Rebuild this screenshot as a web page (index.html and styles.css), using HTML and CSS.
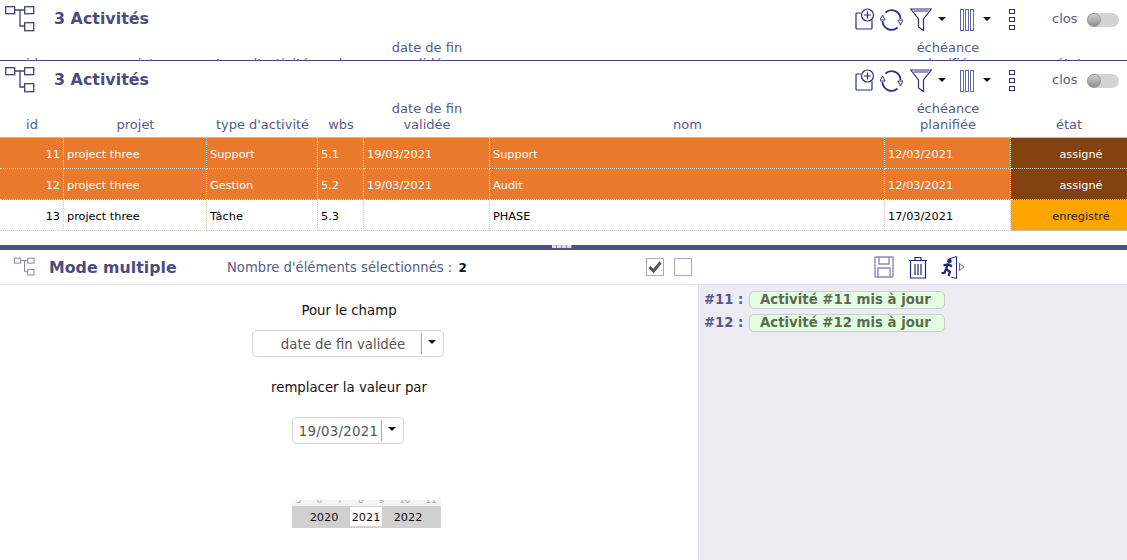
FILE: index.html
```html
<!DOCTYPE html>
<html lang="fr">
<head>
    <meta charset="UTF-8">
    <title>Activités</title>
    <link rel="stylesheet" href="styles.css">
</head>
<body>
    <svg class="defs" width="0" height="0">
        <symbol id="i-tree" viewBox="0 0 30 30">
            <g fill="none" stroke="currentColor" stroke-width="1.300">
                <rect x="0.700" y="1.700" width="9" height="7"/>
                <rect x="19.700" y="1.700" width="9" height="7"/>
                <rect x="19.700" y="17.700" width="9" height="8"/>
                <path d="M10 5H20M15 5V21H20"/>
            </g>
        </symbol>
        <symbol id="i-add" viewBox="0 0 20 22">
            <g fill="none" stroke="currentColor" stroke-width="1.200">
                <path d="M6 5H2Q1 5 1 6V20Q1 21 2 21H16Q17 21 17 20V12"/>
                <circle cx="12.500" cy="7" r="6" fill="#fff"/>
                <path d="M12.500 3.500V10.500M9 7H16"/>
            </g>
        </symbol>
        <symbol id="i-refresh" viewBox="0 0 23 22">
            <g fill="none" stroke="currentColor" stroke-width="1.800">
                <path d="M5.500 3.500A9 9 0 0 1 20.500 10"/>
                <path d="M17.500 18.500A9 9 0 0 1 2.500 12"/>
                <path d="M18 11H23L20.500 16ZM0 11H5L2.500 6Z" stroke-width="1"/>
            </g>
        </symbol>
        <symbol id="i-filter" viewBox="0 0 22 23">
            <path d="M0.700 1H21.300L13.500 11V22.500L8.500 19V11Z" fill="none" stroke="currentColor" stroke-width="1.200"/>
            <path d="M3.500 3H18.500" stroke="currentColor" stroke-width="1"/>
        </symbol>
        <symbol id="i-columns" viewBox="0 0 14 22">
            <g fill="none" stroke="#6466a6" stroke-width="1">
                <rect x="0.500" y="0.500" width="3" height="21"/>
                <rect x="5.500" y="0.500" width="3" height="21"/>
                <rect x="10.500" y="0.500" width="3" height="21"/>
            </g>
        </symbol>
        <symbol id="i-more" viewBox="0 0 6 21">
            <g fill="none" stroke="currentColor" stroke-width="1">
                <rect x="0.500" y="0.500" width="5" height="4"/>
                <rect x="0.500" y="8.500" width="5" height="4"/>
                <rect x="0.500" y="16.500" width="5" height="4"/>
            </g>
        </symbol>
    </svg>

    <section class="pane pane-clipped">
        <div class="list-head">
            <svg class="ico-tree"><use href="#i-tree"/></svg>
            <h1 class="list-title">3 Activités</h1>
            <div class="tools">
                <svg class="ico ico-add"><use href="#i-add"/></svg>
                <svg class="ico ico-refresh"><use href="#i-refresh"/></svg>
                <svg class="ico ico-filter"><use href="#i-filter"/></svg>
                <span class="caret caret-filter"></span>
                <svg class="ico ico-columns"><use href="#i-columns"/></svg>
                <span class="caret caret-columns"></span>
                <svg class="ico ico-more"><use href="#i-more"/></svg>
                <span class="closed-label">clos</span>
                <span class="switch"><span class="knob"></span></span>
            </div>
        </div>
        <table class="grid">
            <colgroup>
                <col class="c-id"><col class="c-project"><col class="c-type"><col class="c-wbs"><col class="c-date"><col class="c-name"><col class="c-due"><col class="c-state">
            </colgroup>
            <thead>
                <tr>
                    <th>id</th><th>projet</th><th>type d'activité</th><th>wbs</th><th>date de fin<br>validée</th><th>nom</th><th>échéance<br>planifiée</th><th>état</th>
                </tr>
            </thead>
        </table>
    </section>

    <section class="pane pane-list">
        <div class="list-head">
            <svg class="ico-tree"><use href="#i-tree"/></svg>
            <h1 class="list-title">3 Activités</h1>
            <div class="tools">
                <svg class="ico ico-add"><use href="#i-add"/></svg>
                <svg class="ico ico-refresh"><use href="#i-refresh"/></svg>
                <svg class="ico ico-filter"><use href="#i-filter"/></svg>
                <span class="caret caret-filter"></span>
                <svg class="ico ico-columns"><use href="#i-columns"/></svg>
                <span class="caret caret-columns"></span>
                <svg class="ico ico-more"><use href="#i-more"/></svg>
                <span class="closed-label">clos</span>
                <span class="switch"><span class="knob"></span></span>
            </div>
        </div>
        <table class="grid">
            <colgroup>
                <col class="c-id"><col class="c-project"><col class="c-type"><col class="c-wbs"><col class="c-date"><col class="c-name"><col class="c-due"><col class="c-state">
            </colgroup>
            <thead>
                <tr>
                    <th>id</th><th>projet</th><th>type d'activité</th><th>wbs</th><th>date de fin<br>validée</th><th>nom</th><th>échéance<br>planifiée</th><th>état</th>
                </tr>
            </thead>
            <tbody>
                <tr class="selected">
                    <td class="num">11</td><td>project three</td><td>Support</td><td>5.1</td><td>19/03/2021</td><td>Support</td><td>12/03/2021</td><td class="state state-assigned">assigné</td>
                </tr>
                <tr class="selected">
                    <td class="num">12</td><td>project three</td><td>Gestion</td><td>5.2</td><td>19/03/2021</td><td>Audit</td><td>12/03/2021</td><td class="state state-assigned">assigné</td>
                </tr>
                <tr>
                    <td class="num">13</td><td>project three</td><td>Tâche</td><td>5.3</td><td></td><td>PHASE</td><td>17/03/2021</td><td class="state state-recorded">enregistré</td>
                </tr>
            </tbody>
        </table>
    </section>

    <div class="splitter"><span class="grip"></span></div>

    <section class="multi">
        <div class="multi-bar">
            <svg class="ico-tree-small"><use href="#i-tree"/></svg>
            <h2 class="multi-title">Mode multiple</h2>
            <span class="multi-count">Nombre d'éléments sélectionnés : <b>2</b></span>
            <span class="check check-all">
                <svg viewBox="0 0 16 16" width="16" height="16"><path d="M2.500 8L6.500 12L13.500 3.500" fill="none" stroke="#555" stroke-width="3"/></svg>
            </span>
            <span class="check check-none"></span>
            <div class="multi-actions">
                <svg class="act-save" viewBox="0 0 20 22">
                    <g fill="none" stroke="#8d8bb8" stroke-width="1.400">
                        <path d="M1.700 1H18.300Q19 1 19 1.700V20.300Q19 21 18.300 21H1.700Q1 21 1 20.300V1.700Q1 1 1.700 1Z"/>
                        <path d="M5 1V8H15V1M4 21V12H16V21"/>
                    </g>
                </svg>
                <svg class="act-delete" viewBox="0 0 20 23">
                    <g fill="none" stroke="#1f2a78" stroke-width="1.200">
                        <path d="M1 4.500H19M7 4V1.500H13V4"/>
                        <path d="M2.500 5V22H17.500V5"/>
                        <path d="M7 8V19M10 8V19M13 8V19"/>
                    </g>
                </svg>
                <svg class="act-exit" viewBox="0 0 24 23">
                    <path d="M8 3L15.500 0.500V22.500L10 21" fill="none" stroke="#1f2a78" stroke-width="1"/>
                    <path d="M18.500 7.500L23 11L18.500 14.500Z" fill="none" stroke="#6668a0" stroke-width="1"/>
                    <circle cx="8.500" cy="5" r="2.300" fill="#1f2a78"/>
                    <path d="M7 8L5 13L9 16L7.500 20M5 13L3.500 17H0.500M7 8L2.500 9.500M7 8L11 10.500" fill="none" stroke="#1f2a78" stroke-width="2.200"/>
                </svg>
            </div>
        </div>
        <div class="multi-body">
            <div class="form-side">
                <p class="form-label">Pour le champ</p>
                <div class="combo combo-field">
                    <span class="combo-value">date de fin validée</span>
                    <span class="combo-arrow"></span>
                </div>
                <p class="form-label form-label-second">remplacer la valeur par</p>
                <div class="combo combo-date">
                    <span class="combo-value">19/03/2021</span>
                    <span class="combo-arrow"></span>
                </div>
                <div class="calendar">
                    <div class="cal-days"><span>5</span><span>6</span><span>7</span><span>8</span><span>9</span><span>10</span><span>11</span></div>
                    <div class="cal-years"><span class="cal-prev">2020</span><span class="cal-current">2021</span><span class="cal-next">2022</span></div>
                </div>
            </div>
            <div class="result-side">
                <div class="result-line"><span class="result-id">#11 :</span><span class="result-msg">Activité #11 mis à jour</span></div>
                <div class="result-line"><span class="result-id">#12 :</span><span class="result-msg">Activité #12 mis à jour</span></div>
            </div>
        </div>
    </section>
</body>
</html>
```
FILE: styles.css
```css
* {
    margin: 0;
    padding: 0;
    box-sizing: border-box;
}

body {
    font-family: "DejaVu Sans", Verdana, sans-serif;
    background: #fff;
    color: #000;
    height: 560px;
    overflow: hidden;
}

.defs {
    display: block;
    height: 0;
}

/* List panes */
.pane-clipped {
    height: 61px;
    overflow: hidden;
    border-bottom: 1px solid #4b4b80;
}

.pane-list {
    height: 184px;
}

.list-head {
    display: flex;
    align-items: flex-start;
    height: 40px;
    padding: 5px 0 0 5px;
}

.ico-tree {
    flex: none;
    width: 30px;
    height: 30px;
    color: #3f3f82;
}

.list-title {
    margin: 5px 0 0 19px;
    font-size: 15.900px;
    line-height: 18px;
    font-weight: bold;
    color: #4b4b80;
}

.tools {
    margin-left: auto;
    display: flex;
    align-items: flex-start;
    width: 272px;
    height: 30px;
    color: #2f2f80;
}

.ico {
    display: block;
    flex: none;
}

.ico-add {
    width: 20px;
    height: 22px;
    margin-top: 3px;
}

.ico-refresh {
    width: 23px;
    height: 22px;
    margin: 4px 0 0 5px;
}

.ico-filter {
    width: 22px;
    height: 23px;
    margin: 3px 0 0 7px;
}

.caret {
    flex: none;
    width: 0;
    height: 0;
    margin-top: 12px;
    border-left: 4px solid transparent;
    border-right: 4px solid transparent;
    border-top: 4px solid #111;
}

.caret-filter {
    margin-left: 6px;
}

.ico-columns {
    width: 14px;
    height: 22px;
    margin: 4px 0 0 14px;
}

.caret-columns {
    margin-left: 9px;
}

.ico-more {
    width: 6px;
    height: 21px;
    margin: 4px 0 0 18px;
}

.closed-label {
    margin: 6px 0 0 37px;
    font-size: 13px;
    line-height: 15px;
    color: #5a5a8a;
}

.switch {
    display: block;
    width: 32px;
    height: 14px;
    margin: 8px 0 0 9px;
    border-radius: 7px;
    background: #d4d4d4;
}

.knob {
    display: block;
    width: 14px;
    height: 14px;
    border-radius: 50%;
    background: linear-gradient(#d0d0d0, #8f8f8f);
    border: 1px solid #999;
}

/* Grid */
.grid {
    width: 1127px;
    table-layout: fixed;
    border-collapse: separate;
    border-spacing: 0;
    font-size: 11.300px;
}

.c-id { width: 64px; }
.c-project { width: 143px; }
.c-type { width: 111px; }
.c-wbs { width: 46px; }
.c-date { width: 126px; }
.c-name { width: 395px; }
.c-due { width: 126px; }
.c-state { width: 116px; }

.grid th {
    height: 37px;
    padding-bottom: 4px;
    vertical-align: bottom;
    font-size: 13px;
    line-height: 16px;
    font-weight: normal;
    color: #555a88;
    border-bottom: 1px solid #bbb;
}

.grid td {
    height: 31px;
    padding: 2px 3px 0;
    border-right: 1px dotted #cfc7b5;
    border-bottom: 1px dotted #cfc7b5;
    white-space: nowrap;
}

.grid .num {
    text-align: right;
}

.selected td {
    background: #e97a2d;
    color: #fff;
    border-color: #f5e6d8;
}

.grid .state {
    padding: 2px 0 0 24px;
    text-align: center;
    border-right: 0;
}

.grid .state-assigned {
    background: #844211;
    color: #fff;
}

.grid .state-recorded {
    background: #ffa500;
    color: #222;
}

.splitter {
    position: relative;
    height: 5px;
    background: #4f4f80;
}

.grip {
    position: absolute;
    left: 552px;
    top: 0;
    width: 20px;
    height: 3px;
    background: repeating-linear-gradient(90deg, #dcdce8 0, #dcdce8 4px, #8a8aa8 4px, #8a8aa8 5px);
}

/* Multiple mode */
.multi-bar {
    display: flex;
    align-items: center;
    height: 35px;
    padding-left: 14px;
    border-bottom: 1px solid #e0e0ec;
}

.ico-tree-small {
    flex: none;
    width: 21px;
    height: 21px;
    color: #7a7aa8;
}

.multi-title {
    flex: none;
    width: 178px;
    margin-left: 14px;
    font-size: 15.800px;
    font-weight: bold;
    color: #4b4b80;
}

.multi-count {
    flex: none;
    width: 419px;
    font-size: 13.200px;
    color: #555a88;
}

.multi-count b {
    margin-left: 2px;
    font-size: 12px;
    color: #111;
}

.check {
    flex: none;
    width: 18px;
    height: 18px;
    border: 1px solid #a8a8c8;
}

.check svg {
    display: block;
}

.check-none {
    margin-left: 10px;
}

.multi-actions {
    display: flex;
    align-items: center;
    margin-left: 182px;
}

.act-save {
    width: 20px;
    height: 22px;
}

.act-delete {
    width: 20px;
    height: 23px;
    margin-left: 14px;
}

.act-exit {
    width: 24px;
    height: 23px;
    margin-left: 13px;
}

.multi-body {
    display: flex;
    height: 275px;
}

.form-side {
    position: relative;
    width: 699px;
    flex: none;
    border-right: 1px solid #dcdcea;
    padding-top: 18px;
}

.form-label {
    width: 698px;
    text-align: center;
    font-size: 13.300px;
    line-height: 16px;
    color: #111;
}

.form-label-second {
    margin-top: 23px;
}

.combo {
    display: flex;
    align-items: center;
    height: 27px;
    border: 1px solid #d4d4d4;
    border-radius: 5px;
    font-size: 13.300px;
    color: #555;
    background: #fff;
}

.combo-field {
    width: 192px;
    margin: 11px 0 0 252px;
}

.combo-date {
    width: 112px;
    margin: 21px 0 0 292px;
}

.combo-value {
    flex: 1;
    padding: 1px 0 0 12px;
    text-align: center;
    white-space: nowrap;
}

.combo-date .combo-value {
    padding-left: 3px;
    letter-spacing: 0.300px;
}

.combo-arrow {
    position: relative;
    flex: none;
    width: 22px;
    height: 21px;
    border-left: 1px solid #aaa;
}

.combo-arrow::after {
    content: "";
    position: absolute;
    left: 6px;
    top: 7px;
    border-left: 4px solid transparent;
    border-right: 4px solid transparent;
    border-top: 4px solid #111;
}

.calendar {
    position: absolute;
    left: 292px;
    top: 215px;
    width: 149px;
}

.cal-days {
    display: flex;
    justify-content: space-between;
    height: 6px;
    padding: 0 4px;
    background: #f4f4f4;
    overflow: hidden;
    font-size: 9px;
    line-height: 6px;
    color: #aaa;
}

.cal-days span {
    margin-top: -3px;
}

.cal-years {
    display: flex;
    height: 22px;
    background: #d0d0d0;
    font-size: 11.300px;
    line-height: 23px;
    color: #111;
}

.cal-years span {
    width: 58px;
    text-align: center;
}

.cal-years .cal-prev {
    padding-left: 6px;
}

.cal-years .cal-next {
    padding-right: 6px;
}

.cal-years .cal-current {
    width: 32px;
    height: 19px;
    margin-top: 1px;
    line-height: 21px;
    background: #fff;
}

.result-side {
    flex: 1;
    background: #edecf4;
    padding-top: 3px;
}

.result-line {
    display: flex;
    align-items: center;
    height: 23px;
    padding-left: 5px;
}

.result-id {
    flex: none;
    width: 45px;
    font-size: 13.200px;
    font-weight: bold;
    color: #56568a;
}

.result-msg {
    width: 196px;
    height: 18px;
    padding-left: 10px;
    border: 1px solid #ccc;
    border-radius: 5px;
    background: #e2fde2;
    font-size: 13.300px;
    line-height: 16px;
    font-weight: bold;
    color: #5e6a50;
    white-space: nowrap;
}
```
